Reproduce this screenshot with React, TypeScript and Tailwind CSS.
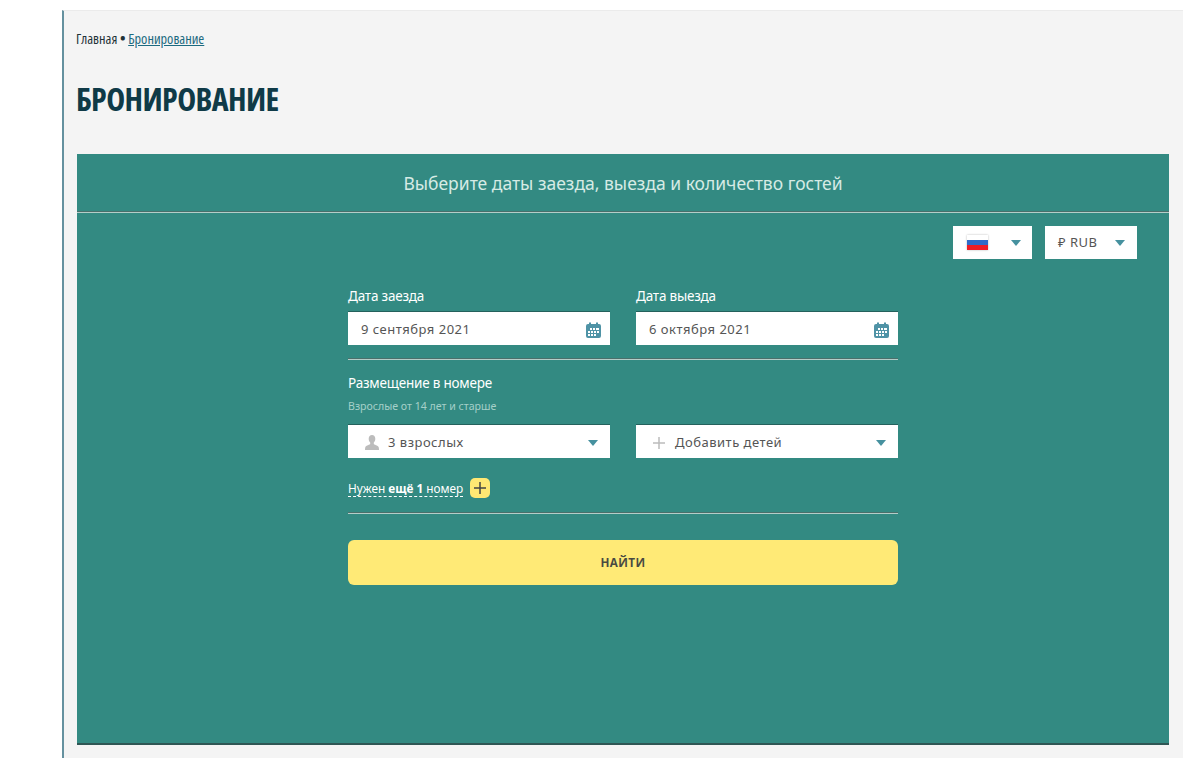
import React from 'react';

const Caret = () => (
  <span className="w-0 h-0 border-x-[5px] border-x-transparent border-t-[6px] border-t-[#46919f]" />
);

const CalendarIcon = () => (
  <svg width="15" height="16" viewBox="0 0 15 16" className="shrink-0">
    <path d="M2 2h1V0.5h2V2h5V0.5h2V2h1a2 2 0 0 1 2 2v10a2 2 0 0 1-2 2H2a2 2 0 0 1-2-2V4a2 2 0 0 1 2-2z" fill="#4f93a6" />
    <g fill="#fff">
      <rect x="4" y="6" width="2" height="2" />
      <rect x="7" y="6" width="2" height="2" />
      <rect x="10" y="6" width="3" height="2" />
      <rect x="2" y="9" width="2" height="2" />
      <rect x="5" y="9" width="2" height="2" />
      <rect x="8" y="9" width="2" height="2" />
      <rect x="11" y="9" width="2" height="2" />
      <rect x="2" y="12" width="2" height="2" />
      <rect x="5" y="12" width="2" height="2" />
      <rect x="8" y="12" width="2" height="2" />
    </g>
  </svg>
);

const PersonIcon = () => (
  <svg width="14" height="15" viewBox="0 0 14 15" className="shrink-0">
    <path d="M7 0c2 0 3.3 1.5 3.3 3.8 0 1.600-.6 3-1.500 3.800v1.400c0 .6 4.200 1.400 4.900 3.200.2.600.3 1.600.3 2.800H0c0-1.200.1-2.200.3-2.800.7-1.800 4.900-2.600 4.900-3.200V7.600C4.300 6.800 3.700 5.400 3.700 3.800 3.700 1.500 5 0 7 0z" fill="#bcbcbc" />
  </svg>
);

const Divider = () => (
  <div className="h-[2px] border-t border-t-[#4a6f6b] bg-[#b4cdc8]" />
);

const DateField = ({ label, value }: { label: string; value: string }) => (
  <div className="w-[262px]">
    <div className="h-[22px] text-[13.5px] tracking-[-0.2px] leading-[22px] text-white">{label}</div>
    <div className="mt-[4px] h-[34px] pt-[2px] bg-white border-t border-t-[#24615c] flex items-center justify-between pl-[13px] pr-[9px] font-['Noto_Sans',sans-serif] text-[13px] tracking-[0.5px] text-[#555]">
      <span>{value}</span>
      <CalendarIcon />
    </div>
  </div>
);

const App: React.FC = () => {
  return (
    <div className="w-[1200px] h-[758px] bg-white overflow-hidden font-['Noto_Sans',sans-serif]">
      <div className="ml-[62px] mt-[10px] w-[1121px] h-[748px] bg-[#f4f4f4] border-l-2 border-l-[#65919f] border-t border-t-[#ebebeb] pl-[13px] pr-[14px]">
        <div className="pt-[17px] h-[37px] -ml-px text-[14.3px] leading-[22px] text-[#1f3238] font-['Open_Sans',sans-serif] [font-stretch:75%]">
          Главная <span className="font-bold">•</span>{' '}
          <a className="text-[#1c6a80] underline">Бронирование</a>
        </div>
        <h1 className="mt-[28px] h-[46px] -ml-px text-[32px] tracking-[-0.6px] leading-[46px] font-bold text-[#0f3a47] font-['Open_Sans',sans-serif] [font-stretch:75%]">
          БРОНИРОВАНИЕ
        </h1>

        <div className="mt-[32px] h-[591px] bg-[#338a82] border-b-2 border-b-[#2f5654]">
          <div className="h-[57px] pt-[1px] flex items-center justify-center text-[17.5px] text-[#d6ebe5]">
            Выберите даты заезда, выезда и количество гостей
          </div>
          <Divider />

          <div className="flex justify-end gap-[13px] pt-[13px] pr-[32px]">
            <div className="w-[79px] h-[33px] bg-white flex items-center justify-between pl-[14px] pr-[11px]">
              <span className="w-[21px] h-[15px] flex flex-col shadow-[0_0_2px_#bbb]">
                <span className="flex-1 bg-white" />
                <span className="flex-1 bg-[#2f6bc8]" />
                <span className="flex-1 bg-[#ee1c25]" />
              </span>
              <Caret />
            </div>
            <div className="w-[92px] h-[33px] bg-white flex items-center justify-between pl-[13px] pr-[12px] font-['Noto_Sans',sans-serif] text-[13px] tracking-[0.5px] text-[#555]">
              <span>₽ RUB</span>
              <Caret />
            </div>
          </div>

          <div className="ml-[271px] w-[550px] mt-[26px]">
            <div className="flex justify-between">
              <DateField label="Дата заезда" value="9 сентября 2021" />
              <DateField label="Дата выезда" value="6 октября 2021" />
            </div>

            <div className="mt-[13px]"><Divider /></div>

            <div className="mt-[12px] h-[22px] text-[13.5px] tracking-[-0.2px] leading-[22px] text-white">Размещение в номере</div>
            <div className="mt-[2px] h-[20px] text-[10.6px] leading-[20px] text-[#a5d0c9]">Взрослые от 14 лет и старше</div>

            <div className="mt-[8px] flex justify-between font-['Noto_Sans',sans-serif] text-[13px] tracking-[0.5px] text-[#555]">
              <div className="w-[262px] h-[34px] pt-[2px] bg-white border-t border-t-[#24615c] flex items-center justify-between pl-[17px] pr-[12px]">
                <span className="flex items-center gap-[9px]">
                  <PersonIcon />
                  3 взрослых
                </span>
                <Caret />
              </div>
              <div className="w-[262px] h-[34px] pt-[2px] bg-white border-t border-t-[#24615c] flex items-center justify-between pl-[17px] pr-[12px]">
                <span className="flex items-center gap-[10px]">
                  <svg width="12" height="12" viewBox="0 0 12 12" className="shrink-0">
                    <path d="M6 0v12M0 6h12" stroke="#bcbcbc" strokeWidth="1.500" />
                  </svg>
                  Добавить детей
                </span>
                <Caret />
              </div>
            </div>

            <div className="mt-[20px] h-[20px] flex items-center gap-[7px]">
              <span className="mt-[2px] text-[11.8px] leading-[15px] text-white border-b border-dashed border-b-white">
                Нужен <b>ещё 1</b> номер
              </span>
              <span className="w-[20px] h-[20px] rounded-[5px] bg-[#ffe873] flex items-center justify-center">
                <svg width="12" height="12" viewBox="0 0 12 12">
                  <path d="M6 0v12M0 6h12" stroke="#444" strokeWidth="1.500" />
                </svg>
              </span>
            </div>

            <div className="mt-[14px]"><Divider /></div>

            <button className="mt-[26px] w-full h-[45px] rounded-[6px] bg-[#ffea76] font-['Open_Sans',sans-serif] text-[11.7px] font-bold tracking-[0.4px] text-[#4a4a42]">
              НАЙТИ
            </button>
          </div>
        </div>
      </div>
    </div>
  );
};

export default App;
